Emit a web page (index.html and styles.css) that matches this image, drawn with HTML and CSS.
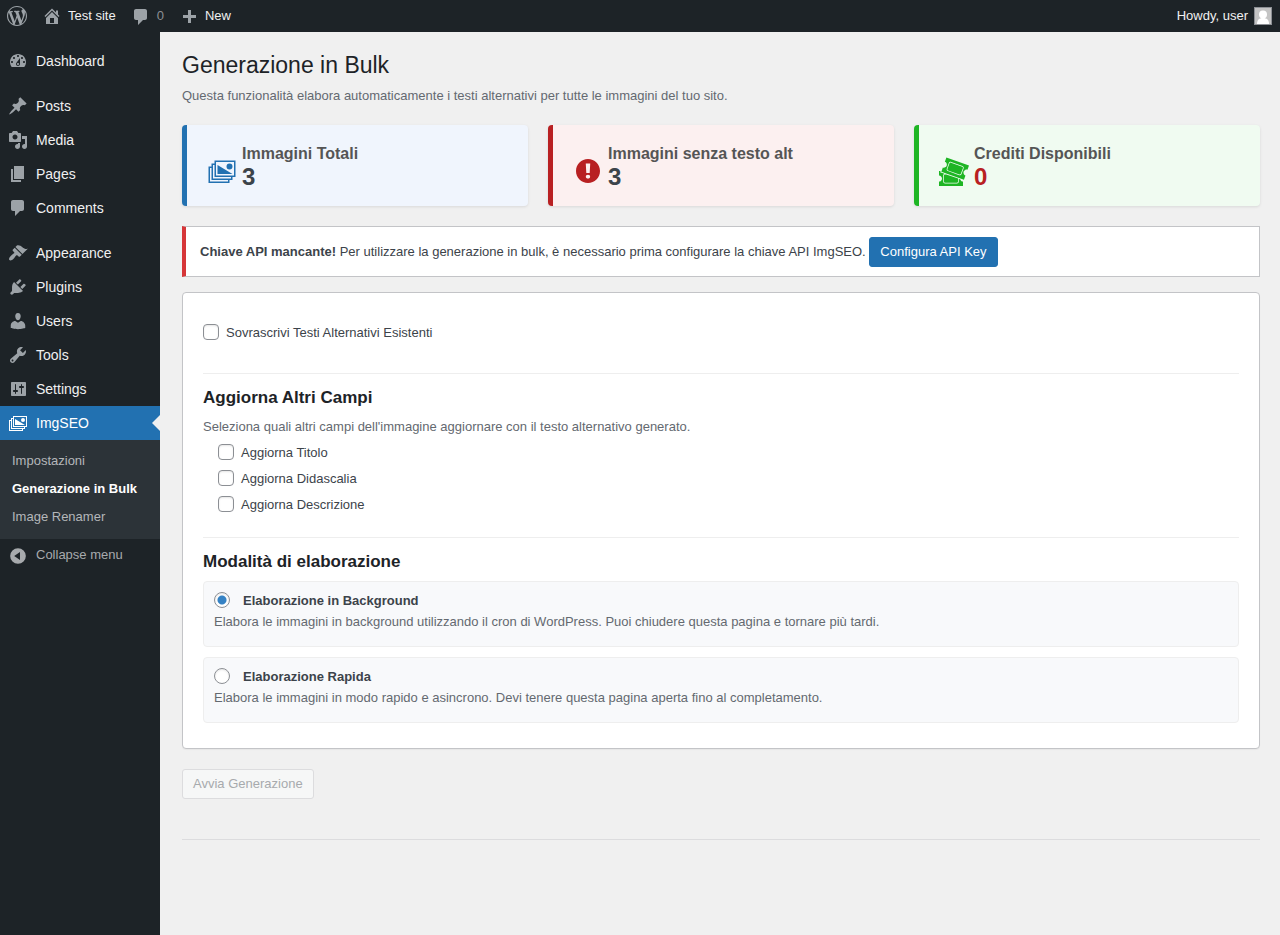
FILE: index.html
```html
<!DOCTYPE html>
<html lang="it">
<head>
  <meta charset="utf-8">
  <meta name="viewport" content="width=device-width, initial-scale=1">
  <title>Generazione in Bulk</title>
  <link rel="stylesheet" href="styles.css">
</head>
<body>
  <header class="adminbar">
    <a class="bar-item" href="#" aria-label="WordPress">
      <svg class="icon" viewBox="0 0 20 20"><path d="M20 10c0-5.51-4.49-10-10-10C4.48 0 0 4.49 0 10c0 5.52 4.48 10 10 10 5.51 0 10-4.48 10-10zM7.78 15.37L4.37 6.22c.55-.02 1.17-.08 1.17-.08.5-.06.44-1.13-.06-1.11 0 0-1.45.11-2.37.11-.18 0-.37 0-.58-.01C4.12 2.69 6.87 1.11 10 1.11c2.33 0 4.45.87 6.05 2.34-.68-.11-1.65.39-1.65 1.58 0 .74.45 1.36.9 2.1.35.61.55 1.36.55 2.46 0 1.49-1.4 5-1.4 5l-3.03-8.37c.54-.02.82-.17.82-.17.5-.05.44-1.25-.06-1.22 0 0-1.44.12-2.38.12-.87 0-2.33-.12-2.33-.12-.5-.03-.56 1.2-.06 1.22l.92.08 1.26 3.41zM17.41 10c.24-.64.74-1.87.43-4.25.7 1.29 1.05 2.71 1.05 4.25 0 3.29-1.73 6.24-4.4 7.78.97-2.59 1.94-5.2 2.92-7.78zM6.1 18.09C3.12 16.65 1.11 13.53 1.11 10c0-1.3.23-2.48.72-3.59C3.25 10.3 4.67 14.2 6.1 18.09zm4.03-6.63l2.58 6.98c-.86.29-1.76.45-2.71.45-.79 0-1.57-.11-2.29-.33.81-2.38 1.62-4.74 2.42-7.1z"/></svg>
    </a>
    <a class="bar-item" href="#">
      <svg class="icon" viewBox="0 0 20 20"><path d="M16 8.5l1.53 1.53-1.06 1.06L10 4.6l-6.47 6.49-1.06-1.06L10 2.5l4 4v-2h2v4zm-6-2.46l6 5.99V18H4v-5.97zM12 17v-5H8v5h4z"/></svg>
      Test site
    </a>
    <a class="bar-item muted" href="#">
      <svg class="icon" viewBox="0 0 20 20"><path d="M5 2h9c1.1 0 2 .9 2 2v7c0 1.1-.9 2-2 2h-2l-5 5v-5H5c-1.1 0-2-.9-2-2V4c0-1.1.9-2 2-2z"/></svg>
      0
    </a>
    <a class="bar-item" href="#">
      <svg class="icon" viewBox="0 0 20 20"><path d="M17 9v3h-5v5H9v-5H4V9h5V4h3v5h5z"/></svg>
      New
    </a>
    <a class="bar-item account" href="#">
      Howdy, user
      <svg class="avatar" viewBox="0 0 18 18"><rect width="18" height="18" fill="#8c8f94"/><rect x="1" y="1" width="16" height="16" fill="#c4c4c4"/><circle cx="9" cy="7.6" r="4" fill="#fff"/><path d="M3 17c0-4 2-6 6-6s6 2 6 6z" fill="#fff"/></svg>
    </a>
  </header>

  <div class="layout">
    <nav class="sidebar">
      <ul class="menu">
        <li><a href="#"><svg class="icon" viewBox="0 0 20 20"><path d="M3.76 16h12.48c1.1-1.37 1.76-3.11 1.76-5 0-4.42-3.58-8-8-8s-8 3.58-8 8c0 1.89.66 3.63 1.76 5zM10 4c.55 0 1 .45 1 1s-.45 1-1 1-1-.45-1-1 .45-1 1-1zM6 6c.55 0 1 .45 1 1s-.45 1-1 1-1-.45-1-1 .45-1 1-1zm8 0c.55 0 1 .45 1 1s-.45 1-1 1-1-.45-1-1 .45-1 1-1zm-5.37 5.55L12 7v6c0 1.1-.9 2-2 2s-2-.9-2-2c0-.57.24-1.08.63-1.45zM4 10c.55 0 1 .45 1 1s-.45 1-1 1-1-.45-1-1 .45-1 1-1zm12 0c.55 0 1 .45 1 1s-.45 1-1 1-1-.45-1-1 .45-1 1-1zm-5 3c0-.55-.45-1-1-1s-1 .45-1 1 .45 1 1 1 1-.45 1-1z"/></svg>Dashboard</a></li>
        <li class="separator"></li>
        <li><a href="#"><svg class="icon" viewBox="0 0 20 20"><path d="M10.44 3.02l1.82-1.82 6.36 6.35-1.83 1.82c-1.05-.68-2.48-.57-3.41.36l-.75.75c-.92.93-1.04 2.35-.35 3.41l-1.83 1.82-2.41-2.41-2.8 2.79c-.42.42-3.38 2.71-3.8 2.29s1.86-3.39 2.28-3.81l2.79-2.79L4.1 9.36l1.83-1.82c1.05.69 2.48.57 3.4-.36l.75-.75c.93-.92 1.05-2.35.36-3.41z"/></svg>Posts</a></li>
        <li><a href="#"><svg class="icon" viewBox="0 0 20 20"><path d="M13 11V4c0-.55-.45-1-1-1h-1.67L9 1H5L3.67 3H2c-.55 0-1 .45-1 1v7c0 .55.45 1 1 1h10c.55 0 1-.45 1-1zM7 4.5c1.38 0 2.5 1.12 2.5 2.5S8.38 9.5 7 9.5 4.5 8.38 4.5 7 5.62 4.5 7 4.5zM14 6h5v10.5c0 1.38-1.12 2.5-2.5 2.5S14 17.88 14 16.5s1.12-2.5 2.5-2.5c.17 0 .34.02.5.05V9h-3V6zm-4 8.05V13h2v3.5c0 1.38-1.12 2.5-2.5 2.5S7 17.88 7 16.5 8.12 14 9.5 14c.17 0 .34.02.5.05z"/></svg>Media</a></li>
        <li><a href="#"><svg class="icon" viewBox="0 0 20 20"><path d="M6 15V2h10v13H6zm-1 1h8v2H3V5h2v11z"/></svg>Pages</a></li>
        <li><a href="#"><svg class="icon" viewBox="0 0 20 20"><path d="M5 2h9c1.1 0 2 .9 2 2v7c0 1.1-.9 2-2 2h-2l-5 5v-5H5c-1.1 0-2-.9-2-2V4c0-1.1.9-2 2-2z"/></svg>Comments</a></li>
        <li class="separator"></li>
        <li><a href="#"><svg class="icon" viewBox="0 0 20 20"><path d="M14.48 11.06L7.41 3.99l1.5-1.5c.5-.56 2.3-.47 3.51.32 1.21.8 1.43 1.28 2.91 2.1 1.18.64 2.45 1.26 4.45.85zm-.71.71L6.7 4.7 4.93 6.47c-.39.39-.39 1.02 0 1.41l1.06 1.06c.39.39.39 1.03 0 1.42-.6.6-1.43 1.11-2.21 1.69-.35.26-.7.53-1.01.84C1.43 14.23.4 16.08 1.4 17.07c.99 1 2.84-.03 4.18-1.36.31-.31.58-.66.85-1.02.57-.78 1.08-1.61 1.69-2.21.39-.39 1.02-.39 1.41 0l1.06 1.06c.39.39 1.02.39 1.41 0z"/></svg>Appearance</a></li>
        <li><a href="#"><svg class="icon" viewBox="0 0 20 20"><path d="M13.11 4.36L9.87 7.6 8 5.73l3.24-3.24c.35-.34 1.05-.2 1.56.32.52.51.66 1.21.31 1.55zm-8 1.77l.91-1.12 9.01 9.01-1.19.84c-.71.71-2.63 1.16-3.82 1.16H6.14L4.9 17.26c-.59.59-1.54.59-2.12 0-.59-.58-.59-1.53 0-2.12l1.24-1.24v-3.88c0-1.13.4-3.19 1.09-3.89zm7.26 3.97l3.24-3.24c.34-.35 1.04-.21 1.55.31.52.51.66 1.21.31 1.55l-3.24 3.25z"/></svg>Plugins</a></li>
        <li><a href="#"><svg class="icon" viewBox="0 0 20 20"><path d="M10 9.25c-2.27 0-2.73-3.44-2.73-3.44C7 4.02 7.82 2 9.97 2c2.16 0 2.98 2.02 2.71 3.81 0 0-.41 3.44-2.68 3.44zm0 2.57L12.72 10c2.39 0 4.52 2.33 4.52 4.53v2.49s-3.65 1.13-7.24 1.13c-3.65 0-7.24-1.13-7.24-1.13v-2.49c0-2.25 1.94-4.48 4.47-4.48z"/></svg>Users</a></li>
        <li><a href="#"><svg class="icon" viewBox="0 0 20 20"><path d="M16.68 9.77c-1.34 1.34-3.3 1.67-4.95.99l-5.41 6.52c-.99.99-2.59.99-3.58 0s-.99-2.59 0-3.57l6.52-5.42c-.68-1.65-.35-3.61.99-4.95 1.28-1.28 3.12-1.62 4.72-1.06l-2.89 2.89 2.82 2.82 2.86-2.87c.53 1.58.18 3.39-1.08 4.65zM3.81 16.21c.4.39 1.04.39 1.43 0 .4-.4.4-1.04 0-1.43-.39-.4-1.03-.4-1.43 0-.39.39-.39 1.03 0 1.43z"/></svg>Tools</a></li>
        <li><a href="#"><svg class="icon" viewBox="0 0 20 20"><path d="M18 16V4c0-.55-.45-1-1-1H4c-.55 0-1 .45-1 1v12c0 .55.45 1 1 1h13c.55 0 1-.45 1-1zM8 11h1c.55 0 1 .45 1 1s-.45 1-1 1H8v1.5c0 .28-.22.5-.5.5s-.5-.22-.5-.5V13H6c-.55 0-1-.45-1-1s.45-1 1-1h1V5.5c0-.28.22-.5.5-.5s.5.22.5.5V11zm5-2h-1c-.55 0-1-.45-1-1s.45-1 1-1h1V5.5c0-.28.22-.5.5-.5s.5.22.5.5V7h1c.55 0 1 .45 1 1s-.45 1-1 1h-1v5.5c0 .28-.22.5-.5.5s-.5-.22-.5-.5V9z"/></svg>Settings</a></li>
        <li class="current">
          <a href="#"><svg class="icon" viewBox="0 0 20 20"><path fill-rule="evenodd" d="M5 3h14v11h-2v2h-2v2H1V7h2V5h2zM18 13V4H6v9zM16 15v-1H5V6H4v9zM14 17v-1H3V8H2v9zM7 6l10 6H7zM15 5a2 2 0 1 1 0 4 2 2 0 0 1 0-4z"/></svg>ImgSEO</a>
          <ul class="submenu">
            <li><a href="#">Impostazioni</a></li>
            <li><a class="active" href="#">Generazione in Bulk</a></li>
            <li><a href="#">Image Renamer</a></li>
          </ul>
        </li>
      </ul>
      <button class="collapse" type="button"><svg class="icon" viewBox="0 0 20 20"><path fill-rule="evenodd" d="M10 2.16a7.84 7.84 0 1 1 0 15.68 7.84 7.84 0 0 1 0-15.68zM12 13.88V6.12L6.18 9.97z"/></svg>Collapse menu</button>
    </nav>

    <main class="content">
      <h1>Generazione in Bulk</h1>
      <p class="intro">Questa funzionalità elabora automaticamente i testi alternativi per tutte le immagini del tuo sito.</p>

      <div class="stats">
        <div class="stat blue">
          <svg class="stat-icon" viewBox="0 0 20 20"><path fill-rule="evenodd" d="M5 3h14v11h-2v2h-2v2H1V7h2V5h2zM18 13V4H6v9zM16 15v-1H5V6H4v9zM14 17v-1H3V8H2v9zM7 6l10 6H7zM15 5a2 2 0 1 1 0 4 2 2 0 0 1 0-4z"/></svg>
          <div>
            <h3>Immagini Totali</h3>
            <p class="number">3</p>
          </div>
        </div>
        <div class="stat red">
          <svg class="stat-icon" viewBox="0 0 20 20"><path d="M10 2c4.42 0 8 3.58 8 8s-3.58 8-8 8-8-3.58-8-8 3.58-8 8-8zm1.13 9.38l.35-6.46H8.52l.35 6.46h2.26zm-.09 3.36c.24-.23.37-.55.37-.96 0-.42-.12-.74-.36-.97s-.59-.35-1.06-.35-.82.12-1.07.35-.37.55-.37.97c0 .41.13.73.38.96.26.23.61.34 1.06.34s.8-.11 1.05-.34z"/></svg>
          <div>
            <h3>Immagini senza testo alt</h3>
            <p class="number">3</p>
          </div>
        </div>
        <div class="stat green">
          <svg class="stat-icon" viewBox="0 0 20 20"><path d="M20 6.38L18.99 9.2v-.01c-.52-.19-1.03-.16-1.53.08s-.85.62-1.04 1.14-.16 1.03.07 1.53c.24.5.62.84 1.15 1.03v.01l-1.01 2.82-15.06-5.38.99-2.79c.52.19 1.03.16 1.53-.08.5-.23.84-.61 1.03-1.13s.16-1.03-.08-1.53c-.23-.49-.61-.83-1.13-1.02L4.93 1zm-4.97 5.69l1.37-3.76c.12-.31.1-.65-.04-.95s-.39-.53-.7-.65L8.14 3.98c-.64-.23-1.37.12-1.6.74L5.17 8.48c-.24.65.1 1.37.74 1.6l7.52 2.74c.14.05.28.08.43.08.52 0 1-.33 1.17-.83zM7.97 4.45l7.51 2.73c.19.07.34.21.43.39.08.18.09.38.02.57l-1.37 3.76c-.13.38-.58.59-.96.45L6.09 9.61c-.39-.14-.59-.57-.45-.96l1.37-3.76c.1-.29.39-.49.7-.49.09 0 .17.02.26.05zm6.82 12.14c.35.27.75.41 1.2.41H16v3H0v-2.96c.55 0 1.03-.2 1.41-.59.39-.38.59-.86.59-1.41s-.2-1.02-.59-1.41-.86-.59-1.41-.59V10h1.05l-.28.8 2.87 1.02c-.51.16-.89.62-.89 1.18v4c0 .69.56 1.25 1.25 1.25h8c.69 0 1.25-.56 1.25-1.25v-1.75l.83.3c.12.43.36.78.71 1.04zM3.25 17v-4c0-.41.34-.75.75-.75h.83l7.92 2.83V17c0 .41-.34.75-.75.75H4c-.41 0-.75-.34-.75-.75z"/></svg>
          <div>
            <h3>Crediti Disponibili</h3>
            <p class="number zero">0</p>
          </div>
        </div>
      </div>

      <div class="notice">
        <strong>Chiave API mancante!</strong> Per utilizzare la generazione in bulk, è necessario prima configurare la chiave API ImgSEO.
        <a class="button primary" href="#">Configura API Key</a>
      </div>

      <form>
        <div class="panel">
          <label class="option overwrite"><input type="checkbox" name="overwrite">Sovrascrivi Testi Alternativi Esistenti</label>

          <section class="group">
            <h2>Aggiorna Altri Campi</h2>
            <p class="hint">Seleziona quali altri campi dell'immagine aggiornare con il testo alternativo generato.</p>
            <div class="fields">
              <label class="option"><input type="checkbox" name="title">Aggiorna Titolo</label>
              <label class="option"><input type="checkbox" name="caption">Aggiorna Didascalia</label>
              <label class="option"><input type="checkbox" name="description">Aggiorna Descrizione</label>
            </div>
          </section>

          <section class="group">
            <h2>Modalità di elaborazione</h2>
            <div class="mode">
              <label class="option"><input type="radio" name="mode" value="background" checked><strong>Elaborazione in Background</strong></label>
              <p>Elabora le immagini in background utilizzando il cron di WordPress. Puoi chiudere questa pagina e tornare più tardi.</p>
            </div>
            <div class="mode">
              <label class="option"><input type="radio" name="mode" value="fast"><strong>Elaborazione Rapida</strong></label>
              <p>Elabora le immagini in modo rapido e asincrono. Devi tenere questa pagina aperta fino al completamento.</p>
            </div>
          </section>
        </div>

        <button class="button" type="submit" disabled>Avvia Generazione</button>
      </form>
      <hr>
    </main>
  </div>
</body>
</html>
```
FILE: styles.css
```css
* {
  box-sizing: border-box;
}

body {
  margin: 0;
  min-height: 100vh;
  display: flex;
  flex-direction: column;
  background: #f0f0f0;
  color: #3c434a;
  font-family: "Liberation Sans", Arial, sans-serif;
  font-size: 13px;
  line-height: 20px;
}

h1, h2, h3, p, ul {
  margin: 0;
  padding: 0;
}

ul {
  list-style: none;
}

a {
  text-decoration: none;
}

.icon {
  width: 20px;
  height: 20px;
  flex: none;
  fill: #9ca2a7;
}

/* top bar */
.adminbar {
  display: flex;
  height: 32px;
  background: #1d2327;
}

.bar-item {
  display: flex;
  align-items: center;
  gap: 6px;
  padding: 0 8px 0 7px;
  color: #f0f0f1;
}

.bar-item.muted {
  color: #8c8f94;
}

.muted .icon {
  margin-top: 2px;
}

.account {
  margin-left: auto;
}

.avatar {
  width: 18px;
  height: 18px;
}

/* sidebar */
.layout {
  display: flex;
  flex: 1;
}

.sidebar {
  width: 160px;
  flex: none;
  padding-top: 12px;
  background: #1d2327;
}

.menu a,
.collapse {
  display: flex;
  align-items: center;
  gap: 8px;
  height: 34px;
  padding: 0 8px;
  color: #f0f0f1;
  font-size: 14px;
}

.separator {
  height: 11px;
}

.current > a {
  position: relative;
  background: #2271b1;
  color: #fff;
}

.current > a .icon {
  fill: #fff;
}

.current > a::after {
  content: "";
  position: absolute;
  right: 0;
  top: 9px;
  border: 8px solid transparent;
  border-left: 0;
  border-right-color: #f0f0f0;
}

.submenu {
  padding: 7px 0 8px;
  background: #2c3338;
}

.menu .submenu a {
  height: 28px;
  padding: 0 12px;
  color: #b4b7ba;
  font-size: 13px;
}

.menu .submenu .active {
  color: #fff;
  font-weight: bold;
}

.collapse {
  width: 100%;
  height: 30px;
  border: 0;
  background: none;
  color: #a7aaad;
  font-family: inherit;
  font-size: 13px;
  cursor: pointer;
}

.collapse .icon {
  margin-top: 4px;
  fill: #a7aaad;
}

/* page */
.content {
  flex: 1;
  min-width: 0;
  padding: 18px 20px 40px 22px;
}

h1 {
  color: #1d2327;
  font-size: 23px;
  font-weight: normal;
  line-height: 30px;
}

.intro {
  margin-top: 6px;
  color: #646970;
}

.stats {
  display: flex;
  gap: 20px;
  margin: 19px 0 20px;
}

.stat {
  display: flex;
  flex: 1;
  gap: 5px;
  padding: 20px 20px 16px;
  border-left: 5px solid;
  border-radius: 4px;
  box-shadow: 0 1px 3px rgba(0, 0, 0, 0.1);
}

.stat-icon {
  width: 30px;
  height: 30px;
  margin-top: 11px;
  flex: none;
  fill: currentColor;
}

.stat h3 {
  color: #555;
  font-size: 16px;
  line-height: 18px;
}

.number {
  color: #3c434a;
  font-size: 24px;
  font-weight: bold;
  line-height: 27px;
}

.number.zero {
  color: #b82022;
}

.blue {
  background: #f0f5fd;
  color: #2271b1;
}

.red {
  background: #fcf0f0;
  color: #b82022;
}

.green {
  background: #f0fbf1;
  color: #1eb524;
}

.notice {
  padding: 10px 14px 9px;
  border: 1px solid #c3c4c7;
  border-left: 4px solid #d63638;
  background: #fff;
}

.button {
  display: inline-block;
  height: 30px;
  padding: 0 10px;
  border: 1px solid #2271b1;
  border-radius: 3px;
  font-family: inherit;
  font-size: 13px;
  line-height: 28px;
}

.button.primary {
  background: #2271b1;
  color: #fff;
}

.button:disabled {
  border-color: #dcdcde;
  background: #f6f7f7;
  color: #a7aaad;
}

.panel {
  margin: 15px 0 20px;
  padding: 20px 20px 15px;
  border: 1px solid #c3c4c7;
  border-radius: 4px;
  background: #fff;
  box-shadow: 0 1px 1px rgba(0, 0, 0, 0.04);
}

.option {
  display: flex;
  align-items: center;
  gap: 7px;
  height: 26px;
}

.option input {
  appearance: none;
  width: 16px;
  height: 16px;
  margin: 0 0 2px;
  flex: none;
  border: 1px solid #8c8f94;
  border-radius: 4px;
  background: #fff;
  box-shadow: inset 0 1px 2px rgba(0, 0, 0, 0.1);
}

.option input[type="radio"] {
  border-radius: 50%;
}

.option input[type="radio"]:checked {
  background: radial-gradient(circle, #3582c4 4px, #fff 5px);
}

.overwrite {
  margin: 7px 0 27px;
}

.group {
  border-top: 1px solid #eee;
  padding-top: 13px;
}

h2 {
  margin-bottom: 8px;
  color: #1d2327;
  font-size: 17px;
  line-height: 22px;
}

.hint {
  color: #646970;
}

.fields {
  margin: 3px 0 19px;
  padding-left: 15px;
}

.mode {
  margin-bottom: 10px;
  padding: 8px 10px 14px;
  border: 1px solid #eee;
  border-radius: 4px;
  background: #f8f9fb;
}

.mode .option {
  gap: 13px;
  height: 22px;
}

.mode p {
  color: #646970;
}

hr {
  margin: 40px 0 0;
  border: 0;
  border-top: 1px solid #dcdcde;
}
```
